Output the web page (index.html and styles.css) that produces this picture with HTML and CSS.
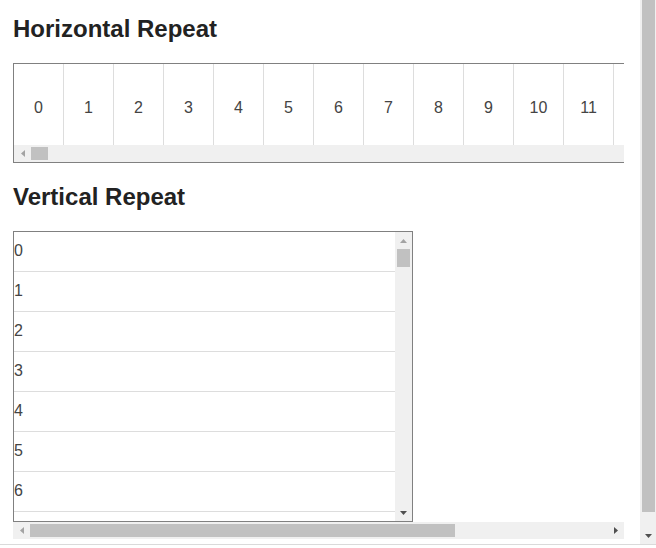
FILE: index.html
```html
<!DOCTYPE html>
<html>
<head>
<meta charset="utf-8">
<link rel="stylesheet" href="styles.css">
</head>
<body>
<div class="frame">
  <div class="main">
    <div class="content">
      <h2 class="title first">Horizontal Repeat</h2>
      <div class="hbox">
        <div class="cells">
          <div class="cell">0</div><div class="cell">1</div><div class="cell">2</div><div class="cell">3</div>
          <div class="cell">4</div><div class="cell">5</div><div class="cell">6</div><div class="cell">7</div>
          <div class="cell">8</div><div class="cell">9</div><div class="cell">10</div><div class="cell">11</div>
        </div>
        <div class="sb sb-h">
          <span class="sb-btn"><svg width="4" height="7" viewBox="0 0 4 7"><polygon points="4,0 4,7 0,3.5" class="arrow-off"/></svg></span>
          <span class="sb-thumb thumb-small"></span>
          <span class="sb-fill"></span>
        </div>
      </div>
      <h2 class="title second">Vertical Repeat</h2>
      <div class="vbox">
        <div class="rows">
          <div class="row">0</div><div class="row">1</div><div class="row">2</div><div class="row">3</div>
          <div class="row">4</div><div class="row">5</div><div class="row">6</div>
        </div>
        <div class="sb sb-v">
          <span class="sb-btn"><svg width="7" height="4" viewBox="0 0 7 4"><polygon points="3.5,0 7,4 0,4" class="arrow-off"/></svg></span>
          <span class="sb-thumb thumb-vbox"></span>
          <span class="sb-fill"></span>
          <span class="sb-btn"><svg width="7" height="4" viewBox="0 0 7 4"><polygon points="0,0 7,0 3.5,4" class="arrow-on"/></svg></span>
        </div>
      </div>
      <div class="sb sb-h outer-h">
        <span class="sb-btn"><svg width="4" height="7" viewBox="0 0 4 7"><polygon points="4,0 4,7 0,3.5" class="arrow-off"/></svg></span>
        <span class="sb-thumb thumb-outer"></span>
        <span class="sb-fill"></span>
        <span class="sb-btn"><svg width="4" height="7" viewBox="0 0 4 7"><polygon points="0,0 4,3.5 0,7" class="arrow-on"/></svg></span>
      </div>
    </div>
  </div>
  <div class="sb sb-v page-v">
    <span class="sb-thumb thumb-page"></span>
    <span class="sb-fill"></span>
    <span class="sb-btn"><svg width="7" height="4" viewBox="0 0 7 4"><polygon points="0,0 7,0 3.5,4" class="arrow-on"/></svg></span>
  </div>
</div>
</body>
</html>
```
FILE: styles.css
```css
body {
  margin: 0;
  background: #fff;
  font-family: "Liberation Sans", Arial, sans-serif;
}
.frame {
  display: flex;
  height: 544px;
  border-bottom: 1px solid #dadada;
}
.main {
  flex: 1;
  min-width: 0;
  padding-left: 13px;
  overflow: hidden;
}
.content {
  width: 611px;
  display: flex;
  flex-direction: column;
}
.title {
  margin: 0;
  font-size: 24px;
  line-height: 27px;
  font-weight: bold;
  color: #222;
}
.title.first {
  margin: 15px 0 21px;
}
.title.second {
  margin: 20px 0 21px;
}
.hbox {
  height: 98px;
  border: 1px solid #808080;
  border-right: 0;
  display: flex;
  flex-direction: column;
  overflow: hidden;
  flex: none;
}
.cells {
  display: flex;
  height: 81px;
  overflow: hidden;
  flex: none;
}
.cell {
  flex: 0 0 49px;
  height: 87px;
  border-right: 1px solid #ddd;
  text-align: center;
  line-height: 87px;
  font-size: 16px;
  color: #444;
}
.vbox {
  width: 398px;
  height: 289px;
  border: 1px solid #808080;
  display: flex;
  flex: none;
}
.rows {
  flex: 1;
  overflow: hidden;
}
.row {
  height: 39px;
  border-bottom: 1px solid #ddd;
  line-height: 38px;
  font-size: 16px;
  color: #444;
}
.sb {
  background: #f0f0f0;
  display: flex;
  flex: none;
}
.sb-h {
  height: 17px;
  flex-direction: row;
}
.sb-v {
  width: 17px;
  flex-direction: column;
}
.sb-btn {
  flex: 0 0 17px;
  display: flex;
  align-items: center;
  justify-content: center;
}
.sb-thumb {
  background: #c1c1c1;
  flex: none;
}
.sb-h .sb-thumb {
  margin: 2px 0;
}
.sb-v .sb-thumb {
  margin: 0 2px;
}
.sb-fill {
  flex: 1;
}
.thumb-small {
  width: 17px;
}
.thumb-vbox {
  height: 18px;
}
.thumb-outer {
  width: 425px;
}
.page-v {
  width: 16px;
}
.page-v .sb-thumb.thumb-page {
  height: 512px;
  margin: 0 1px 0 2px;
}
.page-v .sb-btn {
  flex-basis: 17px;
}
.arrow-off {
  fill: #a3a3a3;
}
.arrow-on {
  fill: #505050;
}
svg {
  display: block;
}
```
